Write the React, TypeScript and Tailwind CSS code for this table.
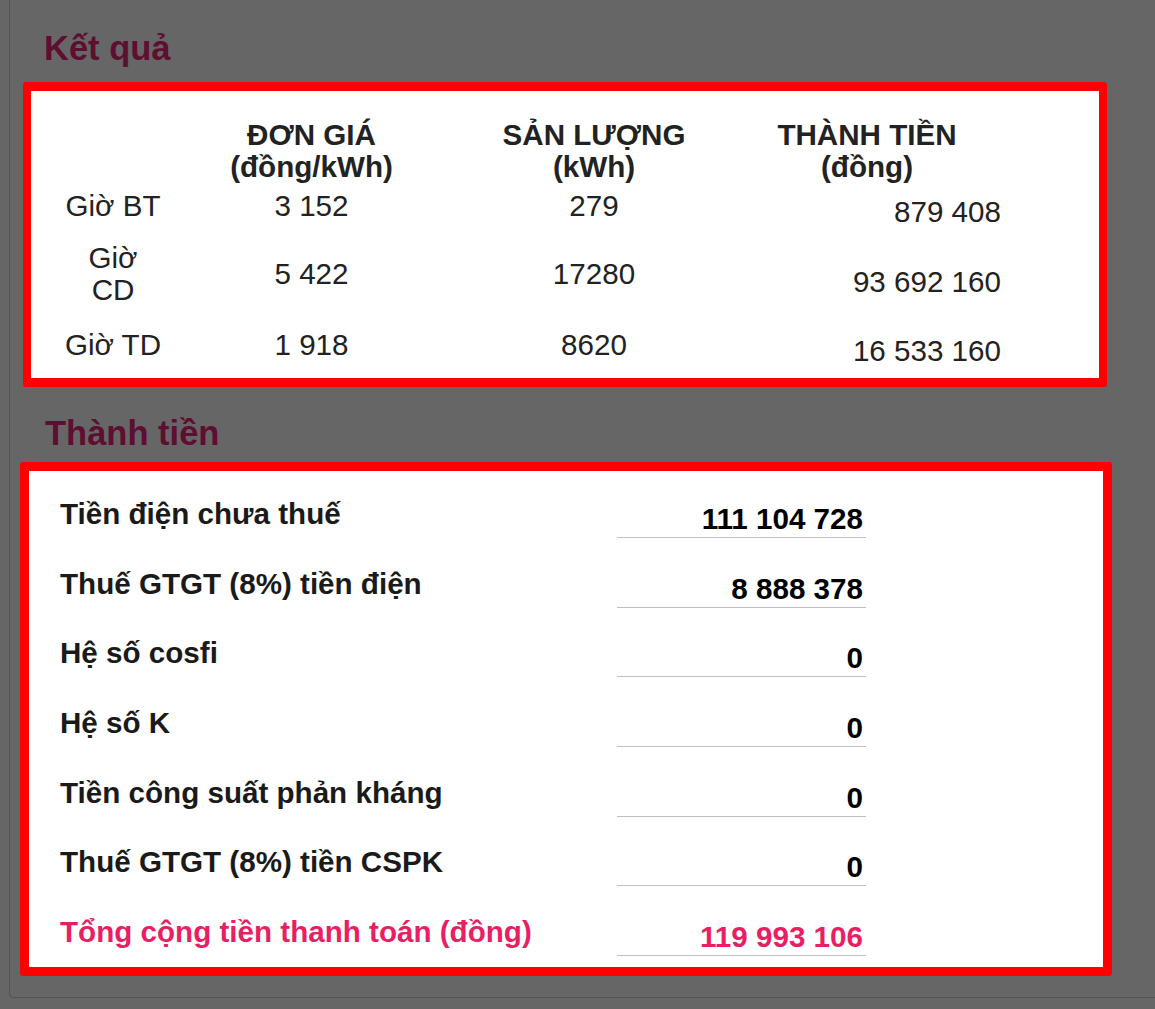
import React from "react";

const tableRows = [
  { label: ["Giờ BT"], price: "3 152", qty: "279", total: "879 408", mt: "mt-[7px]", nudge: "top-[6px]" },
  { label: ["Giờ", "CD"], price: "5 422", qty: "17280", total: "93 692 160", mt: "mt-[20px]", nudge: "top-[8px]" },
  { label: ["Giờ TD"], price: "1 918", qty: "8620", total: "16 533 160", mt: "mt-[23px]", nudge: "top-[6px]" },
];

const summary = [
  { label: "Tiền điện chưa thuế", value: "111 104 728" },
  { label: "Thuế GTGT (8%) tiền điện", value: "8 888 378" },
  { label: "Hệ số cosfi", value: "0" },
  { label: "Hệ số K", value: "0" },
  { label: "Tiền công suất phản kháng", value: "0" },
  { label: "Thuế GTGT (8%) tiền CSPK", value: "0" },
  { label: "Tổng cộng tiền thanh toán (đồng)", value: "119 993 106", total: true },
];

function Heading({ children, className }: { children: React.ReactNode; className: string }) {
  return (
    <h2 className={`text-[34.5px] font-bold leading-[39px] text-[#5e0e30] ${className}`}>{children}</h2>
  );
}

export default function App() {
  return (
    <div className="h-[1009px] w-full overflow-hidden bg-[#666666] font-['Liberation_Sans',Arial,sans-serif]">
      <div className="-mr-8 ml-[9px] h-[998px] rounded-bl-[5px] border-b border-l border-[#535353] pt-[29px]">
        <Heading className="pl-[34px]">Kết quả</Heading>

        {/* bảng đơn giá / sản lượng */}
        <div className="ml-[13px] mt-[14px] w-[1084px] rounded-[3px] border-x-8 border-y-[9px] border-[#ff0000] bg-white pb-[17px] pt-[28px] text-[29.6px] leading-[32px] text-[#222]">
          <div className="grid grid-cols-[164px_233px_332px_241px] font-bold">
            <div />
            <div className="text-center">
              ĐƠN GIÁ
              <br />
              (đồng/kWh)
            </div>
            <div className="text-center">
              SẢN LƯỢNG
              <br />
              (kWh)
            </div>
            <div className="pr-[27px] text-center">
              THÀNH TIỀN
              <br />
              (đồng)
            </div>
          </div>
          {tableRows.map((r) => (
            <div key={r.price} className={`grid grid-cols-[164px_233px_332px_241px] items-center ${r.mt}`}>
              <div className="text-center">
                {r.label.map((l, i) => (
                  <div key={i}>{l}</div>
                ))}
              </div>
              <div className="text-center">{r.price}</div>
              <div className="text-center">{r.qty}</div>
              <div className={`relative text-right ${r.nudge}`}>{r.total}</div>
            </div>
          ))}
        </div>

        <Heading className="mt-[27px] pl-[35px]">Thành tiền</Heading>

        {/* tổng tiền */}
        <div className="ml-[10px] mt-[9px] flex w-[1092px] flex-col gap-[29.67px] rounded-[3px] border-[9px] border-[#ff0000] bg-white pb-[11px] pl-[31px] pt-[27px] text-[29.6px] font-bold leading-[32px]">
          {summary.map((s) => (
            <div key={s.label} className={`flex ${s.total ? "text-[#e91e63]" : "text-[#1a1a1a]"}`}>
              <div className="w-[557px]">{s.label}</div>
              <div
                className={`mt-[5px] w-[249px] border-b border-[#c0c0c0] pb-[2px] pr-[3px] text-right ${
                  s.total ? "" : "text-black"
                }`}
              >
                {s.value}
              </div>
            </div>
          ))}
        </div>
      </div>
    </div>
  );
}
